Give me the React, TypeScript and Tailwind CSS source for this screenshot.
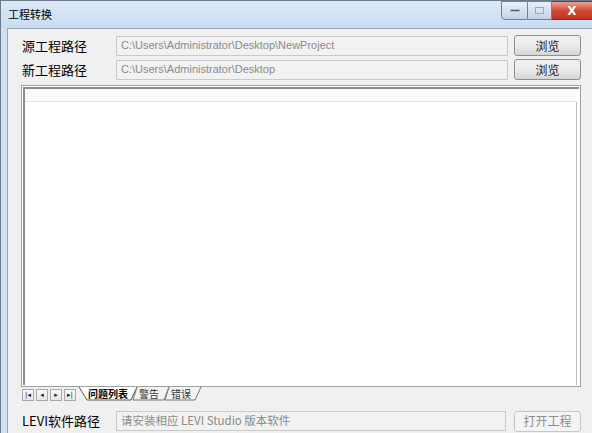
import React from "react";

const ui = { fontFamily: '"Noto Sans CJK SC", "Liberation Sans", sans-serif' };
const latin = { fontFamily: '"Liberation Sans", "Noto Sans CJK SC", sans-serif' };
const mono = { fontFamily: '"DejaVu Sans", "Noto Sans CJK SC", sans-serif' };

function Btn({ label, disabled }: { label: string; disabled?: boolean }) {
  return (
    <div
      className={`w-[67px] h-[21px] rounded-[3px] border flex items-center justify-center text-[12px] ${
        disabled
          ? "border-[#c6c6c6] bg-[#f4f4f4] text-[#8d8d8d]"
          : "border-[#8e8f8f] bg-gradient-to-b from-[#f2f2f2] via-[#ebebeb] to-[#d6d6d6] text-[#1a1a1a]"
      }`}
      style={ui}
    >
      {label}
    </div>
  );
}

function Field({ text }: { text: string }) {
  return (
    <div
      className="flex-1 h-[20px] border border-[#c9c9c9] bg-[#f2f2f2] flex items-center pl-[4px] text-[11px] text-[#8a8a8a] whitespace-nowrap overflow-hidden"
      style={latin}
    >
      {text}
    </div>
  );
}

function NavBtn({ glyph }: { glyph: React.ReactNode }) {
  return (
    <div className="w-[12px] h-[12px] border border-[#a8a8a8] bg-gradient-to-b from-[#fbfbfb] to-[#e6e6e6] flex items-center justify-center">
      {glyph}
    </div>
  );
}

export default function App() {
  return (
    <div className="w-[592px] h-[433px] overflow-hidden bg-[#cfe0f2] border-l border-t border-[#6b7c8f] flex flex-col" style={ui}>
      {/* Title bar */}
      <div className="h-[27px] flex items-start bg-gradient-to-b from-[#dce9f7] to-[#c9dcf0]">
        <div className="pl-[7px] pt-[6px] text-[11px] leading-[14px] text-black">工程转换</div>
        <div className="ml-auto flex">
          <div className="w-[27px] h-[19px] border border-[#6f829a] rounded-bl-[4px] bg-gradient-to-b from-[#e8eff8] to-[#c4d4e7] flex items-center justify-center">
            <div className="w-[10px] h-[3px] bg-[#4d5b6d] border border-white/60" />
          </div>
          <div className="w-[24px] h-[19px] border-y border-r border-[#6f829a] bg-gradient-to-b from-[#e8eff8] to-[#c4d4e7] flex items-center justify-center">
            <div className="w-[9px] h-[7px] border border-[#9aa8b8]" />
          </div>
          <div className="w-[40px] h-[19px] border-y border-[#8a2a1e] bg-gradient-to-b from-[#e9a394] via-[#cf4a35] to-[#c2321e] flex items-center justify-center text-white text-[12px] font-bold" style={mono}>
            X
          </div>
        </div>
      </div>

      {/* Client area */}
      <div className="flex-1 ml-[6px] border-l border-t border-[#9aa7b5] bg-[#f0f0f0] flex flex-col pl-[13px] pr-[11px] pt-[6px]">
        <div className="flex items-center h-[21px]">
          <div className="w-[95px] pl-[1px] text-[13px] text-black">源工程路径</div>
          <Field text="C:\Users\Administrator\Desktop\NewProject" />
          <div className="ml-[6px]"><Btn label="浏览" /></div>
        </div>
        <div className="flex items-center h-[21px] mt-[3px]">
          <div className="w-[95px] pl-[1px] text-[13px] text-black">新工程路径</div>
          <Field text="C:\Users\Administrator\Desktop" />
          <div className="ml-[6px]"><Btn label="浏览" /></div>
        </div>

        {/* List */}
        <div className="mt-[5px] h-[302px] border border-[#a0a0a0] bg-white p-[1px]">
          <div className="h-full border-t-2 border-l-2 border-[#8c8c8c] flex flex-col">
            <div className="h-[13px] bg-[#fafafa] border-b border-[#e2e2e2] mr-[3px]" />
            <div className="flex-1 border-r border-[#bdbdbd] mr-[2px]" />
          </div>
        </div>

        {/* Tabs */}
        <div className="h-[15px] flex items-start pl-[1px]">
          <div className="flex gap-[2px] mt-[2px]">
            <NavBtn glyph={<span className="text-[7px] leading-none text-[#222]" style={mono}>|◂</span>} />
            <NavBtn glyph={<span className="text-[7px] leading-none text-[#222]" style={mono}>◂</span>} />
            <NavBtn glyph={<span className="text-[7px] leading-none text-[#222]" style={mono}>▸</span>} />
            <NavBtn glyph={<span className="text-[7px] leading-none text-[#222]" style={mono}>▸|</span>} />
          </div>
          <svg width="130" height="15" className="ml-[3px]">
            <path d="M0 0 L8 13 L52 13 L58 0" fill="white" stroke="#555" strokeWidth="1" />
            <path d="M58 0 L54 13 L85 13 L90 0" fill="#f3f3f3" stroke="#777" strokeWidth="1" />
            <path d="M90 0 L86 13 L116 13 L122 0" fill="#f3f3f3" stroke="#777" strokeWidth="1" />
          </svg>
          <div className="-ml-[130px] flex text-[10px] leading-[14px]">
            <span className="w-[58px] pl-[9px] font-bold text-black">问题列表</span>
            <span className="w-[32px] pl-[2px] text-[#333]">警告</span>
            <span className="w-[32px] pl-[2px] text-[#333]">错误</span>
          </div>
        </div>

        {/* Bottom row */}
        <div className="flex items-center h-[22px] mt-[8px]">
          <div className="w-[95px] pl-[1px] text-[13px] text-black whitespace-nowrap">LEVI软件路径</div>
          <div className="flex-1 h-[20px] border border-[#c9c9c9] bg-[#f2f2f2] flex items-center pl-[4px] text-[11.5px] text-[#8a8a8a] whitespace-nowrap mr-[2px]">
            请安装相应 LEVI Studio 版本软件
          </div>
          <div className="ml-[6px]"><Btn label="打开工程" disabled /></div>
        </div>
      </div>
    </div>
  );
}
